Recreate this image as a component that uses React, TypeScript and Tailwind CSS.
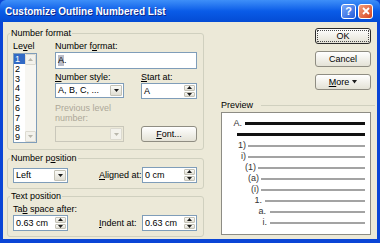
import React from "react";

type Kids = { children: React.ReactNode };

function Ul({ children }: Kids) {
  return <span className="underline decoration-1 underline-offset-[1px]">{children}</span>;
}

function Arrow({ dir, disabled }: { dir: "up" | "down"; disabled?: boolean }) {
  return (
    <svg width="5" height="3" viewBox="0 0 5 3">
      <path d={dir === "up" ? "M0 3 L2.5 0 L5 3 Z" : "M0 0 L5 0 L2.5 3 Z"} fill={disabled ? "#b9b7ac" : "#1b1b1b"} />
    </svg>
  );
}

function Spinner({ value, className = "" }: { value: string; className?: string }) {
  return (
    <div className={`flex shrink-0 h-[16px] border border-[#7f9db9] bg-white ${className}`}>
      <div className="flex-1 pl-[2px] flex items-center whitespace-nowrap">{value}</div>
      <div className="w-[13px] flex flex-col p-[1px] gap-[1px]">
        <div className="flex-1 flex items-center justify-center rounded-[1px] border border-[#c4c2b6] bg-linear-to-b from-[#fbfbf8] to-[#e0ded3]">
          <Arrow dir="up" />
        </div>
        <div className="flex-1 flex items-center justify-center rounded-[1px] border border-[#c4c2b6] bg-linear-to-b from-[#fbfbf8] to-[#e0ded3]">
          <Arrow dir="down" />
        </div>
      </div>
    </div>
  );
}

function Combo({ value, disabled, className = "" }: { value?: string; disabled?: boolean; className?: string }) {
  return (
    <div className={`flex shrink-0 h-[15px] border ${disabled ? "border-[#c9c7ba] bg-[#ece9d8]" : "border-[#7f9db9] bg-white"} ${className}`}>
      <div className="flex-1 pl-[2px] flex items-center whitespace-nowrap overflow-hidden">{value}</div>
      <div className={`w-[12px] m-[1px] flex items-center justify-center rounded-[1px] border ${disabled ? "border-[#dcdad0] bg-[#f3f2ec]" : "border-[#c4c2b6] bg-linear-to-b from-[#fbfbf8] to-[#e0ded3]"}`}>
        <Arrow dir="down" disabled={disabled} />
      </div>
    </div>
  );
}

function Btn({ children, def, className = "" }: Kids & { def?: boolean; className?: string }) {
  return (
    <div className={`h-[16px] flex rounded-[3px] border ${def ? "border-[#2a2a2a]" : "border-[#8f8d82]"} bg-linear-to-b from-[#ffffff] to-[#e4e2d6] ${className}`}>
      <div className={`flex-1 m-[1px] flex items-center justify-center ${def ? "border border-dotted border-[#4a4a4a]" : ""}`}>{children}</div>
    </div>
  );
}

function Group({ title, className = "", children }: Kids & { title: React.ReactNode; className?: string }) {
  return (
    <fieldset className={`border border-[#d0d0bf] rounded-[3px] ${className}`}>
      <legend className="ml-[2px] px-[1px] leading-[11px]">{title}</legend>
      {children}
    </fieldset>
  );
}

const preview = [
  { label: "A.", w: "w-[20px]", ml: "ml-[3px]", line: "h-[3px] bg-[#111]" },
  { label: "", w: "w-[15px]", ml: "ml-0", line: "h-[3px] bg-[#111]" },
  { label: "1)", w: "w-[24px]", ml: "ml-[2px]", line: "h-[2px] bg-[#a3a3a3]" },
  { label: "i)", w: "w-[24px]", ml: "ml-[2px]", line: "h-[2px] bg-[#a3a3a3]" },
  { label: "(1)", w: "w-[34px]", ml: "ml-[2px]", line: "h-[2px] bg-[#a3a3a3]" },
  { label: "(a)", w: "w-[37px]", ml: "ml-[2px]", line: "h-[2px] bg-[#a3a3a3]" },
  { label: "(i)", w: "w-[37px]", ml: "ml-[2px]", line: "h-[2px] bg-[#a3a3a3]" },
  { label: "1.", w: "w-[40px]", ml: "ml-[3px]", line: "h-[2px] bg-[#a3a3a3]" },
  { label: "a.", w: "w-[44px]", ml: "ml-[4px]", line: "h-[2px] bg-[#a3a3a3]" },
  { label: "i.", w: "w-[45px]", ml: "ml-[3px]", line: "h-[2px] bg-[#a3a3a3]" },
];

export default function App() {
  return (
    <div className="w-[380px] h-[243px] flex flex-col bg-[#0a45d6] font-['Liberation_Sans',Arial,sans-serif] text-[9px] leading-[11px] text-black overflow-hidden">
      {/* title bar */}
      <div className="h-[22px] shrink-0 flex items-center pl-[5px] pr-[7px] bg-linear-to-b from-[#3e8ff8] via-[#0a5ce8] to-[#044bd4] rounded-t-[6px]">
        <div className="flex-1 text-white font-bold text-[10px] [text-shadow:1px_1px_#10298a] whitespace-nowrap">
          Customize Outline Numbered List
        </div>
        <div className="flex gap-[2px]">
          <div className="w-[15px] h-[15px] rounded-[3px] border border-white bg-linear-to-br from-[#7aa8f9] to-[#2359da] text-white text-[11px] font-bold leading-none flex items-center justify-center">?</div>
          <div className="w-[15px] h-[15px] rounded-[3px] border border-white bg-linear-to-br from-[#f29b78] to-[#d4401a] flex items-center justify-center">
            <svg width="8" height="8" viewBox="0 0 8 8">
              <path d="M1 1 L7 7 M7 1 L1 7" stroke="white" strokeWidth="1.8" />
            </svg>
          </div>
        </div>
      </div>

      {/* body */}
      <div className="flex-1 mx-[3px] mb-[4px] bg-[#ece9d8] flex">
        {/* left column */}
        <div className="w-[201px] pl-[4px] pt-[6px] flex flex-col">
          <Group title="Number format" className="pb-[6px]">
            <div className="flex pl-[5px] pt-[2px]">
              <div className="w-[24px] flex flex-col">
                <div>Le<Ul>v</Ul>el</div>
                <div className="mt-[1px] h-[90px] border border-[#7f9db9] bg-white flex overflow-hidden">
                  <div className="flex-1 flex flex-col">
                    {[1, 2, 3, 4, 5, 6, 7, 8, 9].map((n) => (
                      <div key={n} className={`h-[9.8px] leading-[10px] pl-[1px] shrink-0 ${n === 1 ? "bg-[#316ac5] text-white" : ""}`}>{n}</div>
                    ))}
                  </div>
                  <div className="w-[11px] flex flex-col bg-[#f7f6f1]">
                    <div className="h-[11px] rounded-[1px] border border-[#dddbd1] bg-[#f3f2ec] flex items-center justify-center">
                      <Arrow dir="up" disabled />
                    </div>
                    <div className="flex-1" />
                    <div className="h-[11px] rounded-[1px] border border-[#dddbd1] bg-[#f3f2ec] flex items-center justify-center">
                      <Arrow dir="down" disabled />
                    </div>
                  </div>
                </div>
              </div>

              <div className="ml-[18px] w-[142px] flex flex-col">
                <div>Number f<Ul>o</Ul>rmat:</div>
                <div className="h-[17px] border border-[#7f9db9] bg-white flex items-center pl-[2px]">
                  <span className="bg-[#b9bcc9]">A</span>.
                </div>
                <div className="flex justify-between mt-[3px]">
                  <div className="w-[69px] flex flex-col">
                    <div><Ul>N</Ul>umber style:</div>
                    <Combo value="A, B, C, ..." />
                  </div>
                  <div className="w-[56px] flex flex-col">
                    <div><Ul>S</Ul>tart at:</div>
                    <Spinner value="A" className="h-[15px]" />
                  </div>
                </div>
                <div className="flex justify-between mt-[4px]">
                  <div className="w-[69px] flex flex-col">
                    <div className="text-[#aca899] leading-[10px]">Previous level<br />number:</div>
                    <Combo disabled className="mt-[3px] h-[16px]" />
                  </div>
                  <Btn className="w-[56px] self-end"><Ul>F</Ul>ont...</Btn>
                </div>
              </div>
            </div>
          </Group>

          <Group title={<>Number p<Ul>o</Ul>sition</>} className="mt-[3px] pb-[5px]">
            <div className="flex items-center pl-[5px] pr-[6px] pt-[3px]">
              <Combo value="Left" className="w-[55px]" />
              <div className="ml-[31px] whitespace-nowrap"><Ul>A</Ul>ligned at:</div>
              <Spinner value="0 cm" className="ml-auto w-[55px] h-[15px]" />
            </div>
          </Group>

          <Group title="Text position" className="mt-[2px] pb-[5px]">
            <div className="pl-[5px] pr-[6px] pt-[2px]">
              <div className="whitespace-nowrap">Ta<Ul>b</Ul> space after:</div>
              <div className="flex items-center">
                <Spinner value="0.63 cm" className="w-[55px]" />
                <div className="ml-[31px] whitespace-nowrap"><Ul>I</Ul>ndent at:</div>
                <Spinner value="0.63 cm" className="ml-auto w-[55px]" />
              </div>
            </div>
          </Group>
        </div>

        {/* right column */}
        <div className="flex-1 flex flex-col pt-[6px] pr-[2px]">
          <div className="flex flex-col items-end gap-[7px] pr-[4px]">
            <Btn def className="w-[56px]">OK</Btn>
            <Btn className="w-[56px]">Cancel</Btn>
            <Btn className="w-[56px]">
              <span><Ul>M</Ul>ore</span>
              <svg width="5" height="4" viewBox="0 0 5 4" className="ml-[3px]">
                <path d="M0 0 L5 0 L2.5 3.5 Z" fill="#1b1b1b" />
              </svg>
            </Btn>
          </div>

          <div className="mt-[10px] pl-[17px] flex items-center">
            <span>Preview</span>
            <div className="flex-1 ml-[8px] h-px bg-[#d0d0bf]" />
          </div>
          <div className="ml-[17px] mr-[4px] mt-[1px] h-[123px] border border-[#8d8c84] bg-white flex flex-col pt-[5px] pr-[5px] text-[#333]">
            {preview.map((r, i) => (
              <div key={i} className="h-[11px] shrink-0 flex items-center">
                <div className={`${r.w} text-right whitespace-nowrap`}>{r.label}</div>
                <div className={`flex-1 ${r.ml} ${r.line}`} />
              </div>
            ))}
          </div>
        </div>
      </div>
    </div>
  );
}
